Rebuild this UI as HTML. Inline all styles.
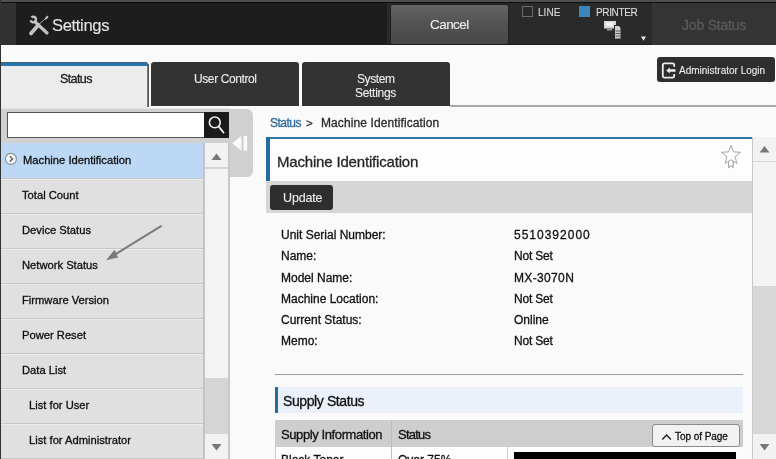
<!DOCTYPE html>
<html><head><meta charset="utf-8">
<style>
*{margin:0;padding:0;box-sizing:border-box}
html,body{width:776px;height:459px;overflow:hidden;background:#fafafa;font-family:"Liberation Sans",sans-serif;position:relative}
.a{position:absolute}
.t{position:absolute;white-space:pre;line-height:1;-webkit-text-stroke:0.3px currentColor;will-change:transform}
</style></head><body>
<div class="a" style="left:0px;top:0px;width:776px;height:45px;background:#1d1d1d"></div>
<div class="a" style="left:0px;top:0px;width:776px;height:2px;background:#4e4e4e"></div>
<div class="a" style="left:0px;top:2px;width:776px;height:1px;background:#0c0c0c"></div>
<div class="a" style="left:1px;top:3px;width:15px;height:42px;background:#323232"></div>
<div class="t" style="left:52.2px;top:18.00px;font-size:16.6px;color:#e4e4e4;letter-spacing:-0.35px;-webkit-text-stroke:0.1px currentColor">Settings</div>
<div class="a" style="left:387px;top:3px;width:389px;height:42px;background:#2a2a2a"></div>
<div class="a" style="left:391px;top:5px;width:117px;height:39px;background:linear-gradient(#656565,#535353 45%,#484848);border-radius:2px;box-shadow:0 0 0 1px #202020"></div>
<div class="a" style="left:387px;top:44px;width:389px;height:1px;background:#1c1c1c"></div>
<div class="t" style="left:430.3px;top:18.00px;font-size:13.5px;color:#eeeeee;letter-spacing:-0.55px;-webkit-text-stroke:0.1px currentColor">Cancel</div>
<div class="a" style="left:652px;top:3px;width:124px;height:42px;background:#343434"></div>
<div class="t" style="left:682.2px;top:18.00px;font-size:14px;color:#5a5a5a;letter-spacing:-0.2px">Job Status</div>
<div class="a" style="left:522px;top:6px;width:11px;height:11px;background:transparent;border:1px solid #6a6a6a"></div>
<div class="t" style="left:537.7px;top:8.00px;font-size:10px;color:#dddddd;letter-spacing:0.05px;-webkit-text-stroke:0.1px currentColor">LINE</div>
<div class="a" style="left:579px;top:6px;width:11px;height:11px;background:#3a86bd"></div>
<div class="t" style="left:596.0px;top:8.00px;font-size:10px;color:#dddddd;letter-spacing:-0.35px;-webkit-text-stroke:0.1px currentColor">PRINTER</div>
<div class="a" style="left:0px;top:0px;width:1px;height:459px;background:#333"></div>
<div class="a" style="left:1px;top:62px;width:148px;height:46px;background:#ececec;border-radius:0 3px 0 0"></div>
<div class="a" style="left:147px;top:63px;width:1px;height:44px;background:#7a7a7a"></div>
<div class="a" style="left:148px;top:64px;width:1px;height:43px;background:#555"></div>
<div class="a" style="left:1px;top:62px;width:147px;height:4px;background:#2a76aa;border-radius:0 3px 0 0"></div>
<div class="a" style="left:1px;top:62px;width:146px;height:1px;background:#3d5f78"></div>
<div class="t" style="left:59.6px;top:73.00px;font-size:12.5px;color:#1a1a1a;letter-spacing:-0.6px">Status</div>
<div class="a" style="left:151px;top:62px;width:148px;height:44px;background:#333;border-radius:3px 3px 0 0"></div>
<div class="t" style="left:193.7px;top:73.00px;font-size:12px;color:#eeeeee;letter-spacing:-0.4px;-webkit-text-stroke:0.1px currentColor">User Control</div>
<div class="a" style="left:302px;top:62px;width:148px;height:44px;background:#333;border-radius:3px 3px 0 0"></div>
<div class="t" style="left:356.9px;top:73.00px;font-size:12px;color:#eeeeee;letter-spacing:-0.4px;-webkit-text-stroke:0.1px currentColor">System</div>
<div class="t" style="left:354.8px;top:87.00px;font-size:12px;color:#eeeeee;letter-spacing:-0.3px;-webkit-text-stroke:0.1px currentColor">Settings</div>
<div class="a" style="left:450px;top:105px;width:326px;height:2px;background:#aaa"></div>
<div class="a" style="left:657px;top:57px;width:118px;height:25px;background:#2e2e2e;border-radius:3px"></div>
<div class="t" style="left:679.3px;top:66.00px;font-size:10px;color:#eeeeee;-webkit-text-stroke:0.1px currentColor">Administrator Login</div>
<div class="a" style="left:1px;top:108px;width:229px;height:1px;background:#e6e6e6"></div>
<div class="a" style="left:1px;top:109px;width:229px;height:350px;background:#d0d0d0"></div>
<div class="a" style="left:200px;top:109px;width:53px;height:68px;background:#d0d0d0;border-radius:0 6px 6px 0"></div>
<div class="a" style="left:7px;top:112px;width:198px;height:26px;background:#fff;border:1px solid #555"></div>
<div class="a" style="left:204px;top:112px;width:25px;height:26px;background:#1a1a1a"></div>
<div class="a" style="left:1px;top:143px;width:202px;height:316px;background:#e0e0e0"></div>
<div class="a" style="left:1px;top:143px;width:202px;height:35px;background:#bcd8f4"></div>
<div class="a" style="left:1px;top:178px;width:202px;height:1px;background:#c6c6c6"></div>
<div class="a" style="left:1px;top:179px;width:202px;height:1px;background:#ebebeb"></div>
<div class="a" style="left:1px;top:213px;width:202px;height:1px;background:#c6c6c6"></div>
<div class="a" style="left:1px;top:214px;width:202px;height:1px;background:#ebebeb"></div>
<div class="a" style="left:1px;top:248px;width:202px;height:1px;background:#c6c6c6"></div>
<div class="a" style="left:1px;top:249px;width:202px;height:1px;background:#ebebeb"></div>
<div class="a" style="left:1px;top:283px;width:202px;height:1px;background:#c6c6c6"></div>
<div class="a" style="left:1px;top:284px;width:202px;height:1px;background:#ebebeb"></div>
<div class="a" style="left:1px;top:318px;width:202px;height:1px;background:#c6c6c6"></div>
<div class="a" style="left:1px;top:319px;width:202px;height:1px;background:#ebebeb"></div>
<div class="a" style="left:1px;top:353px;width:202px;height:1px;background:#c6c6c6"></div>
<div class="a" style="left:1px;top:354px;width:202px;height:1px;background:#ebebeb"></div>
<div class="a" style="left:1px;top:388px;width:202px;height:1px;background:#c6c6c6"></div>
<div class="a" style="left:1px;top:389px;width:202px;height:1px;background:#ebebeb"></div>
<div class="a" style="left:1px;top:423px;width:202px;height:1px;background:#c6c6c6"></div>
<div class="a" style="left:1px;top:424px;width:202px;height:1px;background:#ebebeb"></div>
<div class="a" style="left:1px;top:458px;width:202px;height:1px;background:#c6c6c6"></div>
<div class="a" style="left:1px;top:459px;width:202px;height:1px;background:#ebebeb"></div>
<div class="t" style="left:22.5px;top:155.00px;font-size:11.2px;color:#0e0e0e">Machine Identification</div>
<div class="t" style="left:22.4px;top:190.00px;font-size:11.2px;color:#0e0e0e">Total Count</div>
<div class="t" style="left:22.4px;top:225.00px;font-size:11.2px;color:#0e0e0e">Device Status</div>
<div class="t" style="left:22.4px;top:260.00px;font-size:11.2px;color:#0e0e0e">Network Status</div>
<div class="t" style="left:22.4px;top:295.00px;font-size:11.2px;color:#0e0e0e">Firmware Version</div>
<div class="t" style="left:22.4px;top:330.00px;font-size:11.2px;color:#0e0e0e">Power Reset</div>
<div class="t" style="left:22.4px;top:365.00px;font-size:11.2px;color:#0e0e0e">Data List</div>
<div class="t" style="left:29.4px;top:400.00px;font-size:11.2px;color:#0e0e0e">List for User</div>
<div class="t" style="left:29.4px;top:435.00px;font-size:11.2px;color:#0e0e0e">List for Administrator</div>
<div class="a" style="left:203px;top:143px;width:2px;height:316px;background:#c4c4c4"></div>
<div class="a" style="left:205px;top:143px;width:23px;height:316px;background:#d5d5d5"></div>
<div class="a" style="left:205px;top:143px;width:23px;height:24px;background:#f2f2f2"></div>
<div class="a" style="left:205px;top:169px;width:23px;height:209px;background:#f3f3f3"></div>
<div class="a" style="left:205px;top:434px;width:23px;height:25px;background:#f2f2f2"></div>
<div class="a" style="left:228px;top:143px;width:2px;height:316px;background:#c8c8c8"></div>
<div class="t" style="left:269.8px;top:117.00px;font-size:12px;color:#2d6a9a;letter-spacing:-0.5px">Status</div>
<div class="t" style="left:306.4px;top:118.00px;font-size:11.5px;color:#333">&gt;</div>
<div class="t" style="left:321.2px;top:117.00px;font-size:12px;color:#2a2a2a;letter-spacing:0.1px">Machine Identification</div>
<div class="a" style="left:266px;top:137px;width:486px;height:44px;background:#fdfdfd;border-top:2px solid #2f74a6"></div>
<div class="a" style="left:266px;top:137px;width:4px;height:44px;background:#236c9e"></div>
<div class="t" style="left:277.0px;top:154.00px;font-size:15px;color:#262626;letter-spacing:-0.18px">Machine Identification</div>
<div class="a" style="left:266px;top:181px;width:486px;height:32px;background:#d6d6d6"></div>
<div class="a" style="left:270px;top:185px;width:63px;height:25px;background:#2e2e2e;border-radius:3px"></div>
<div class="t" style="left:282.6px;top:192.00px;font-size:12.5px;color:#eeeeee;letter-spacing:-0.15px;-webkit-text-stroke:0.1px currentColor">Update</div>
<div class="t" style="left:280.9px;top:229.00px;font-size:12px;color:#111">Unit Serial Number:</div>
<div class="t" style="left:514.2px;top:229.00px;font-size:12px;color:#111;letter-spacing:1.0px">5510392000</div>
<div class="t" style="left:280.9px;top:250.00px;font-size:12px;color:#111">Name:</div>
<div class="t" style="left:514.2px;top:250.00px;font-size:12px;color:#111;letter-spacing:-0.2px">Not Set</div>
<div class="t" style="left:280.9px;top:272.00px;font-size:12px;color:#111">Model Name:</div>
<div class="t" style="left:514.2px;top:272.00px;font-size:12px;color:#111;letter-spacing:0.35px">MX-3070N</div>
<div class="t" style="left:280.9px;top:293.00px;font-size:12px;color:#111">Machine Location:</div>
<div class="t" style="left:514.2px;top:293.00px;font-size:12px;color:#111;letter-spacing:-0.2px">Not Set</div>
<div class="t" style="left:280.9px;top:314.00px;font-size:12px;color:#111">Current Status:</div>
<div class="t" style="left:514.2px;top:314.00px;font-size:12px;color:#111">Online</div>
<div class="t" style="left:280.9px;top:335.00px;font-size:12px;color:#111">Memo:</div>
<div class="t" style="left:514.2px;top:335.00px;font-size:12px;color:#111;letter-spacing:-0.2px">Not Set</div>
<div class="a" style="left:275px;top:374px;width:468px;height:1px;background:#9a9a9a"></div>
<div class="a" style="left:275px;top:387px;width:468px;height:26px;background:#eaf1fb"></div>
<div class="a" style="left:275px;top:387px;width:3px;height:26px;background:#236c9e"></div>
<div class="t" style="left:283.1px;top:394.00px;font-size:14px;color:#111;letter-spacing:-0.4px">Supply Status</div>
<div class="a" style="left:275px;top:420px;width:468px;height:27px;background:#cecece"></div>
<div class="a" style="left:275px;top:447px;width:468px;height:12px;background:#fdfdfd"></div>
<div class="a" style="left:391px;top:420px;width:1px;height:39px;background:#bdbdbd"></div>
<div class="a" style="left:507px;top:447px;width:1px;height:12px;background:#cfcfcf"></div>
<div class="a" style="left:275px;top:447px;width:1px;height:12px;background:#c8c8c8"></div>
<div class="t" style="left:280.8px;top:428.00px;font-size:13px;color:#111;letter-spacing:-0.4px">Supply Information</div>
<div class="t" style="left:397.5px;top:428.00px;font-size:13px;color:#111;letter-spacing:-0.75px">Status</div>
<div class="a" style="left:652px;top:424px;width:88px;height:23px;background:#f2f2f2;border:1px solid #8a8a8a;border-radius:3px"></div>
<div class="t" style="left:675.3px;top:432.00px;font-size:10px;color:#111;letter-spacing:-0.05px">Top of Page</div>
<div class="t" style="left:281.4px;top:454.00px;font-size:12px;color:#111">Black Toner</div>
<div class="t" style="left:398.0px;top:454.00px;font-size:12px;color:#111">Over 75%</div>
<div class="a" style="left:514px;top:452px;width:222px;height:7px;background:#000"></div>
<div class="a" style="left:752px;top:137px;width:1px;height:322px;background:#c8c8c8"></div>
<div class="a" style="left:753px;top:137px;width:23px;height:322px;background:#d7d7d7"></div>
<div class="a" style="left:753px;top:137px;width:23px;height:24px;background:#f2f2f2"></div>
<div class="a" style="left:753px;top:162px;width:23px;height:124px;background:#f3f3f3"></div>
<div class="a" style="left:753px;top:434px;width:23px;height:25px;background:#f2f2f2"></div>
<!-- icons -->
<svg class="a" style="left:0;top:0" width="776" height="459" viewBox="0 0 776 459">
 <g fill="none" stroke="#c2c2c2">
  <path d="M31.4 17.36 A2.8 2.8 0 1 1 30.57 20.46" stroke-width="2.4"/>
  <line x1="35.2" y1="22" x2="47" y2="33" stroke-width="3.2" stroke-linecap="round"/>
  <line x1="38.3" y1="25" x2="31" y2="33.4" stroke-width="3.8" stroke-linecap="round"/>
  <line x1="38.3" y1="25" x2="45.4" y2="18.6" stroke-width="0.9"/>
  <ellipse cx="46.6" cy="17.7" rx="2.3" ry="1.1" transform="rotate(-45 46.6 17.7)" fill="#c2c2c2" stroke="none"/>
 </g>
 <!-- printer icon -->
 <rect x="604" y="21" width="12" height="7.5" fill="#d8d8d8"/>
 <rect x="606" y="22.5" width="7" height="3.5" fill="#f4f4f4"/>
 <rect x="607" y="28.5" width="5" height="2" fill="#9a9a9a"/>
 <rect x="614" y="25" width="7" height="14" fill="#2c2c2c"/>
 <path d="M615 26 h4 l1.5 2 v10.5 h-5.5z" fill="#cfcfcf"/>
 <path d="M615.5 31h5M615.5 33.5h5M615.5 36h5" stroke="#3a3a3a" stroke-width="0.8"/>
 <path d="M641 36.5 h5 l-2.5 4.3z" fill="#e8e8e8"/>
 <!-- search icon -->
 <circle cx="214.8" cy="122.4" r="5.4" fill="none" stroke="#f0f0f0" stroke-width="1.6"/>
 <line x1="218.6" y1="126.4" x2="223.6" y2="132.6" stroke="#f0f0f0" stroke-width="1.7" stroke-linecap="round"/>
 <!-- collapse arrow -->
 <path d="M232 143.3 L241.4 136 L241.4 150.4 Z" fill="#fafafa"/>
 <rect x="243.6" y="136" width="3.6" height="14.6" fill="#fafafa"/>
 <!-- chevron circle -->
 <circle cx="10.9" cy="158.9" r="5.5" fill="#f4f7fa" stroke="#8e8e8e" stroke-width="1.1"/>
 <path d="M9.8 156.3 L12.5 158.9 L9.8 161.5" fill="none" stroke="#666" stroke-width="1.5"/>
 <!-- scroll triangles -->
 <path d="M211.5 160 L216.5 153.5 L221.5 160 Z" fill="#777"/>
 <path d="M211.5 444 L216.5 450.5 L221.5 444 Z" fill="#777"/>
 <path d="M759.5 152.5 L764.5 146 L769.5 152.5 Z" fill="#777"/>
 <path d="M759.5 444 L764.5 450.5 L769.5 444 Z" fill="#777"/>
 <!-- arrow annotation -->
 <line x1="161" y1="226.2" x2="110" y2="257.6" stroke="#7a7a7a" stroke-width="2" stroke-linecap="round"/>
 <path d="M106 260.3 L114.6 249.8 L118.2 257.6 Z" fill="#7a7a7a"/>
  <!-- star -->
 <path d="M728.6 159.8 V167.6 L730.8 165.6 L733 167.6 V159.8" fill="#fdfdfd" stroke="#a4a4a4" stroke-width="1"/>
 <polygon points="731.0,145.4 733.5,151.9 740.5,152.3 735.1,156.7 736.9,163.5 731.0,159.7 725.1,163.5 726.9,156.7 721.5,152.3 728.5,151.9" fill="#fdfdfd" stroke="#a4a4a4" stroke-width="1"/>
 <path d="M728.6 161 V167.6 L730.8 165.6 L733 167.6 V161" fill="#fdfdfd" stroke="#a4a4a4" stroke-width="1"/>
<!-- admin login icon -->
 <path d="M674.2 66.8 V65 a1.6 1.6 0 0 0 -1.6 -1.6 H664.4 a1.6 1.6 0 0 0 -1.6 1.6 V76 a1.6 1.6 0 0 0 1.6 1.6 H672.6 a1.6 1.6 0 0 0 1.6 -1.6 V74" fill="none" stroke="#eee" stroke-width="1.8"/>
 <path d="M666.2 70.5 L669.8 67.4 V69.2 H675.5 V71.8 H669.8 V73.6 Z" fill="#eee"/>
 <!-- top of page chevron -->
 <path d="M662.3 439.6 L666.6 435 L670.9 439.6" fill="none" stroke="#222" stroke-width="1.4"/>
</svg>
</body></html>
